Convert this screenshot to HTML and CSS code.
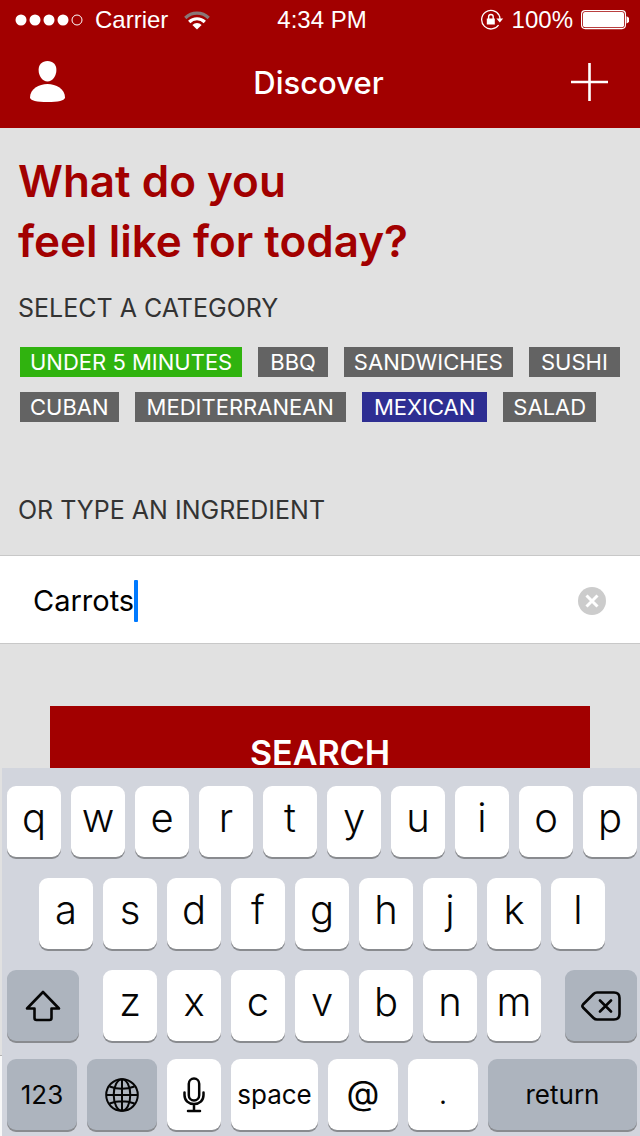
FILE: index.html
```html
<!DOCTYPE html>
<html lang="en">
<head>
<meta charset="utf-8">
<meta name="viewport" content="width=device-width, initial-scale=1">
<title>Discover</title>
<link rel="stylesheet" href="styles.css">
</head>
<body>
<header class="header">
  <div class="status">
    <div class="status-left">
      <svg width="68" height="12" viewBox="0 0 68 12" fill="#fff" aria-hidden="true"><circle cx="6" cy="6" r="5.5"/><circle cx="20" cy="6" r="5.5"/><circle cx="34" cy="6" r="5.5"/><circle cx="48" cy="6" r="5.5"/><circle cx="62" cy="6" r="5" fill="none" stroke="#fff"/></svg>
      <span class="carrier">Carrier</span>
      <svg class="wifi" width="26" height="19" viewBox="0 0 26 19" fill="none" stroke-width="3.2" aria-hidden="true"><path d="M1.3 7a16.5 16.5 0 0 1 23.4 0" stroke="#8a7676"/><path d="M5.2 11a11 11 0 0 1 15.6 0" stroke="#fff"/><path d="M13 18.5 8.4 14a6.5 6.5 0 0 1 9.2 0z" fill="#fff"/></svg>
    </div>
    <time class="clock">4:34 PM</time>
    <div class="status-right">
      <svg width="24" height="22" viewBox="0 0 24 22" fill="none" stroke="#fff" stroke-width="1.3" aria-hidden="true"><path d="M19.2 6.4A9.3 9.3 0 1 0 18.6 16"/><path d="M16.4 9.5h6.8l-3.4 4z" fill="#fff" stroke="none"/><path d="M19.2 6.4q.9 1.8 .7 4"/><path d="M8.6 10V7.8a2.3 2.3 0 0 1 4.6 0V10" stroke-width="1.4"/><path d="M6.8 9.5h8v6h-8z" fill="#fff" stroke="none"/></svg>
      <span>100%</span>
      <svg width="48" height="20" viewBox="0 0 48 20" aria-hidden="true"><rect x=".6" y=".6" width="43.8" height="18" rx="3.5" fill="none" stroke="#fff" stroke-width="1.2"/><rect x="2" y="2" width="41" height="15.2" rx="2" fill="#fff"/><path d="M45.500 6.2q3 1 3 3.6t-3 3.6z" fill="#fff"/></svg>
    </div>
  </div>
  <nav class="nav">
    <button class="nav-btn" aria-label="Profile"><svg width="36" height="42" viewBox="0 0 36 42" fill="#fff" aria-hidden="true"><path d="M17.5 0c5.5 0 8.9 3.5 8.9 9 0 6-3.9 11.5-8.9 11.5S8.6 15 8.6 9c0-5.5 3.4-9 8.9-9z"/><path d="M17.5 23C26 23 35 28 35 36.5c0 3.2-7 4.5-17.5 4.5S0 39.7 0 36.500C0 28 9 23 17.5 23z"/></svg></button>
    <h1 class="nav-title">Discover</h1>
    <button class="nav-btn" aria-label="Add"><svg width="38" height="38" viewBox="0 0 38 38" stroke="#fff" stroke-width="2.6" aria-hidden="true"><path d="M0 19h37M18.500 0v38"/></svg></button>
  </nav>
</header>

<main class="main">
  <h2 class="question">What do you<br>feel like for today?</h2>
  <p class="label">SELECT A CATEGORY</p>
  <div class="tags">
    <button class="tag tag-green">UNDER 5 MINUTES</button>
    <button class="tag tag-roomy">BBQ</button>
    <button class="tag">SANDWICHES</button>
    <button class="tag tag-roomy">SUSHI</button>
    <button class="tag">CUBAN</button>
    <button class="tag tag-roomy">MEDITERRANEAN</button>
    <button class="tag tag-roomy tag-blue">MEXICAN</button>
    <button class="tag">SALAD</button>
  </div>
  <label class="label label-ingredient" for="ingredient">OR TYPE AN INGREDIENT</label>
  <div class="field">
    <input class="field-input" id="ingredient" type="text" value="Carrots">
    <span class="caret"></span>
    <button class="clear" aria-label="Clear"><svg width="28" height="28" viewBox="0 0 28 28" aria-hidden="true"><circle cx="14" cy="14" r="14" fill="#ccc"/><path d="m8.5 8.5 11 11m0-11-11 11" stroke="#fff" stroke-width="3"/></svg></button>
  </div>
  <button class="search">SEARCH</button>
</main>

<div class="tabbar"></div>

<div class="keyboard">
  <div class="row">
    <button class="key">q</button><button class="key">w</button><button class="key">e</button><button class="key">r</button><button class="key">t</button><button class="key">y</button><button class="key">u</button><button class="key">i</button><button class="key">o</button><button class="key">p</button>
  </div>
  <div class="row row-home">
    <button class="key">a</button><button class="key">s</button><button class="key">d</button><button class="key">f</button><button class="key">g</button><button class="key">h</button><button class="key">j</button><button class="key">k</button><button class="key">l</button>
  </div>
  <div class="row row-shift">
    <button class="key key-dark" aria-label="Shift"><svg width="36" height="32" viewBox="0 0 36 32" fill="none" stroke="#050505" stroke-width="2.6" stroke-linejoin="round" aria-hidden="true"><path d="M18 2 34 18.5H26.5V28q0 2-2 2h-13q-2 0-2-2V18.5H2z"/></svg></button>
    <div class="row letters">
      <button class="key">z</button><button class="key">x</button><button class="key">c</button><button class="key">v</button><button class="key">b</button><button class="key">n</button><button class="key">m</button>
    </div>
    <button class="key key-dark" aria-label="Delete"><svg width="40" height="30" viewBox="0 0 40 30" fill="none" stroke="#050505" stroke-width="2.6" stroke-linejoin="round" stroke-linecap="round" aria-hidden="true"><path d="M16 1.5h17q5.5 0 5.5 5.5v16q0 5.5-5.5 5.5H16q-2 0-3.5-1.5L2 16.5q-1.3-1.5 0-3L12.5 3Q14 1.5 16 1.5zM19 9.5l11 11m0-11-11 11"/></svg></button>
  </div>
  <div class="row row-bottom">
    <button class="key key-dark key-text key-wide">123</button>
    <button class="key key-dark key-wide" aria-label="Next keyboard"><svg width="34" height="34" viewBox="0 0 34 34" fill="none" stroke="#050505" stroke-width="2" aria-hidden="true"><circle cx="17" cy="17" r="15.8"/><ellipse cx="17" cy="17" rx="8.3" ry="15.8"/><path d="M17 1v32M1 17h32M4.5 8.5q12.5 4.5 25 0M4.5 25.5q12.5-4.5 25 0"/></svg></button>
    <button class="key key-mic" aria-label="Dictate"><svg width="22" height="36" viewBox="0 0 22 36" fill="none" stroke="#050505" stroke-width="2.5" stroke-linecap="round" aria-hidden="true"><rect x="5.8" y="1.5" width="10.4" height="22" rx="5.2"/><path d="M1.5 15.5V18c0 5.5 4 9 9.5 9s9.5-3.5 9.5-9v-2.5M11 27v6.5M5 34h12"/></svg></button>
    <button class="key key-text key-space">space</button>
    <button class="key key-at key-wide">@</button>
    <button class="key key-text key-wide">.</button>
    <button class="key key-dark key-text key-return">return</button>
  </div>
</div>
</body>
</html>
```
FILE: styles.css
```css
* { box-sizing: border-box; }

body {
  margin: 0;
  min-height: 100vh;
  background: #e1e1e1;
  font-family: Inter, "Liberation Sans", sans-serif;
  color: #000;
}

button {
  margin: 0;
  padding: 0;
  border: 0;
  background: none;
  font: inherit;
  color: inherit;
}

svg { display: block; flex: none; }

.header { background: #a20000; color: #fff; height: 128px; }

.status {
  display: grid;
  grid-template-columns: 1fr auto 1fr;
  align-items: center;
  height: 40px;
  padding: 0 11px 0 15px;
  font: 24px "Liberation Sans", Arial, sans-serif;
}
.status-left, .status-right { display: flex; align-items: center; }
.status-right { justify-content: flex-end; gap: 8px; }
.carrier { margin: 0 16px 0 12px; }

.nav {
  display: flex;
  align-items: center;
  justify-content: space-between;
  height: 84px;
  padding: 0 31px 0 30px;
}
.nav-title { margin: 0; font-size: 31px; font-weight: 500; }

.main { display: flex; flex-direction: column; padding-bottom: 368px; }

.question {
  margin: 23px 18px 0;
  font-size: 44px;
  line-height: 60px;
  font-weight: 600;
  color: #a20000;
}

.label {
  margin: 20px 18px 0;
  font-size: 25px;
  line-height: 34px;
  font-weight: 400;
  color: #333;
}
.label-ingredient { margin-top: 71px; }

.tags {
  display: flex;
  flex-wrap: wrap;
  gap: 15px 16px;
  margin: 22px 18px 0 20px;
}
.tag {
  height: 30px;
  padding: 0 10px;
  background: #636363;
  color: #fff;
  font-size: 22px;
  line-height: 30px;
}
.tag-roomy { padding: 0 12px; }
.tag-green { background: #30b30f; }
.tag-blue { background: #2e2e92; }

.field {
  display: flex;
  align-items: center;
  height: 89px;
  margin-top: 28px;
  padding: 2px 34px 0 33px;
  background: #fff;
  border: solid #c8c8c8;
  border-width: 1px 0;
}
.field-input {
  field-sizing: content;
  padding: 0;
  border: 0;
  outline: 0;
  background: none;
  font: 400 29px Inter, sans-serif;
  color: #000;
}
.caret { width: 4px; height: 42px; border-radius: 1px; background: #007aff; }
.clear { margin-left: auto; }

.search {
  height: 92px;
  margin: 62px 50px 0;
  background: #a20000;
  color: #fff;
  font-size: 34px;
  font-weight: 600;
}

.tabbar {
  position: fixed;
  inset: auto 0 0;
  height: 81px;
  background: #f8f8f8;
  border-top: 1px solid #b2b2b2;
}

.keyboard {
  position: fixed;
  inset: auto 0 0 2px;
  display: flex;
  flex-direction: column;
  gap: 21px;
  padding: 18px 3px 6px 5px;
  background: #d2d5dd;
}
.row { display: flex; gap: 10px; }
.row-home { padding: 0 32px; }
.row-shift { gap: 24px; }
.row-shift > .key { flex: 72; }
.letters { flex: 438; }
.row-bottom { margin-top: -3px; }

.key {
  display: flex;
  flex: 54;
  align-items: center;
  justify-content: center;
  min-width: 0;
  height: 71px;
  padding-bottom: 8px;
  border-radius: 9px;
  background: #fff;
  box-shadow: 0 2px 0 #898b8f;
  font-size: 40px;
  font-weight: 300;
  color: #050505;
}
.key-dark { background: #adb4be; padding-bottom: 0; }
.key-text { font-size: 26px; font-weight: 400; padding-bottom: 0; }
.key-at { font-size: 34px; font-weight: 400; padding-bottom: 4px; }
.key-mic { padding-bottom: 0; }
.key-wide { flex: 70; }
.key-space { flex: 87; }
.key-return { flex: 149; }
```
